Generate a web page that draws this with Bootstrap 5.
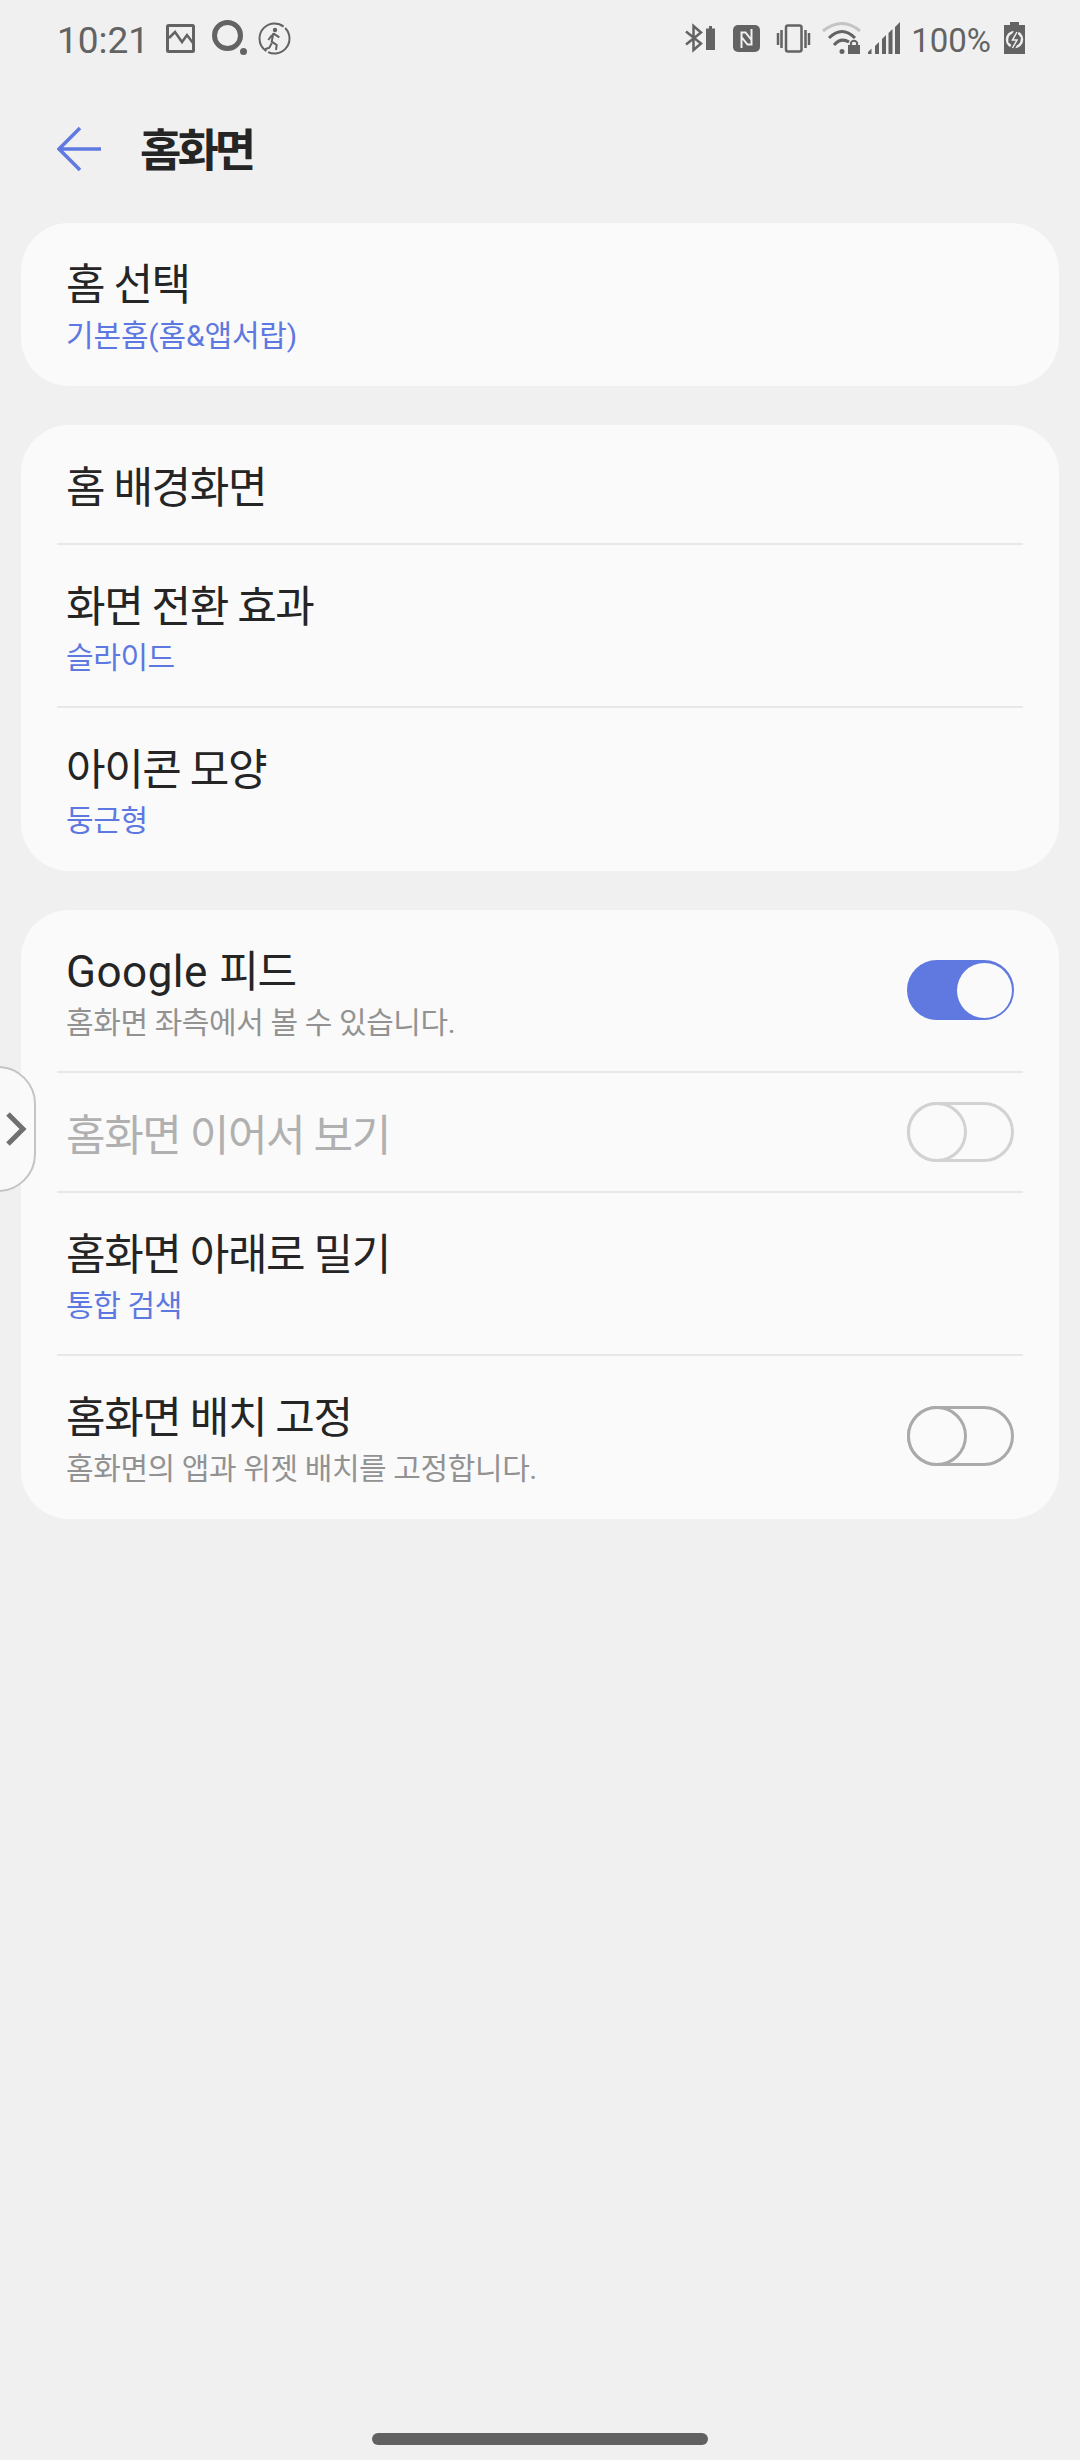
<!DOCTYPE html>
<html lang="ko">
<head>
  <meta charset="UTF-8">
  <title>홈화면</title>
  <link href="https://cdn.jsdelivr.net/npm/bootstrap@5.3.2/dist/css/bootstrap.min.css" rel="stylesheet">
  <style>
    html, body { margin: 0; }
    body { width: 1080px; height: 2460px; background: #f0f0f0; overflow: hidden; position: relative;
      font-family: Roboto, "Noto Sans CJK KR", sans-serif; color: #252525; }
    svg { display: block; flex: none; }
    .status-row { height: 80px; padding: 0 55px 4px 57px; color: #636363; }
    .status-time { font-size: 37px; line-height: 1; margin-top: 4px; }
    .status-pct { font-size: 33px; line-height: 1; margin: 4px 0 0 11px; }
    .ic-photo { margin-left: 17px; }
    .ic-ring { margin-left: 17px; }
    .ic-run { margin-left: 10px; }
    .ic-nfc { margin-left: 18px; }
    .ic-vib { margin-left: 16px; }
    .ic-wifi { margin-left: 11px; }
    .ic-signal { margin-left: 6px; }
    .ic-batt { margin-left: 13px; }
    .title-row { height: 143px; padding: 0 0 5px 57px; }
    .title-text { font-size: 45px; font-weight: 700; letter-spacing: -4px; margin: 6px 0 0 37px; }
    .panel-list { padding: 0 21px; gap: 39px; }
    .panel { background: #fafafa; border-radius: 48px; overflow: hidden; }
    .item { margin: 0 36px; padding: 0 9px; height: 120px; border-bottom: 2px solid #e8e8e8; }
    .item:last-child { border-bottom-color: transparent; }
    .item.tall { height: 163px; }
    .item-text { padding-top: 5px; }
    .item-text.single { padding-top: 7px; }
    .item-label { font-size: 43px; letter-spacing: -1.4px; line-height: 56px; }
    .item-label .latin { letter-spacing: .5px; font-size: 44px; }
    .item-sub { font-size: 30px; letter-spacing: -.4px; line-height: 41px; margin-top: 2px; }
    .item-sub.sub-wide { letter-spacing: -.15px; }
    .sub-accent { color: #5d78e0; }
    .sub-grey { color: #929292; }
    .off .item-label { color: #b0b0b0; }
    .toggle { flex: none; width: 107px; height: 60px; margin-bottom: 1px; border-radius: 30px; border: 3px solid #aaa; position: relative; }
    .toggle::after { content: ""; position: absolute; left: -3px; top: -3px; width: 60px; height: 60px; border-radius: 50%; border: 3px solid #aaa; background: #fafafa; }
    .toggle.on { background: #5f79e0; border-color: #5f79e0; }
    .toggle.on::after { left: auto; right: -1px; top: 0; width: 55px; height: 55px; border: 0; }
    .toggle.dim, .toggle.dim::after { border-color: #d2d2d2; }
    .edge-tab { position: absolute; left: -40px; top: 1066px; width: 76px; height: 126px; border: 2px solid #c4c4c4; border-radius: 38px; background: rgba(250,250,250,.9); }
    .edge-arrow { position: absolute; left: 5px; top: 1112px; }
    .home-bar { position: absolute; left: 372px; top: 2433px; width: 336px; height: 12px; border-radius: 6px; background: #616161; }
  </style>
</head>
<body>
  <div class="status-row d-flex align-items-center justify-content-between">
    <div class="d-flex align-items-center">
      <span class="status-time">10:21</span>
      <svg class="ic-photo" width="29" height="29" viewBox="0 0 29 29" fill="none" stroke="#636363" stroke-width="3"><rect x="1.500" y="1.500" width="26" height="26" rx="1"/><path d="M3 14l6-6 7 10 5-7 6 8" stroke-width="2.500"/></svg>
      <svg class="ic-ring" width="36" height="36" viewBox="0 0 36 36" fill="none"><circle cx="15.500" cy="15.500" r="13" stroke="#636363" stroke-width="5"/><circle cx="31.500" cy="31.500" r="3.500" fill="#636363"/></svg>
      <svg class="ic-run" width="33" height="33" viewBox="0 0 33 33" fill="none" stroke="#636363" stroke-width="2"><circle cx="16.500" cy="16.500" r="15" stroke-dasharray="30 2 48 2 12 0"/><circle cx="17" cy="8" r="2.200" fill="#636363" stroke="none"/><path d="M15.300 11.300l-1.600 8.400 5 3.300-.7 5M15.300 11.300l6 4M14 13l-3.700 5M13.700 21.300l-2.400 4.400-4.300 1.600"/></svg>
    </div>
    <div class="d-flex align-items-center">
      <svg width="30" height="32" viewBox="0 0 30 32" fill="none" stroke="#636363"><path d="M1 9.500l15 12-7.500 6.500V4l7.500 6.500-15 12" stroke-width="2.500"/><path d="M21 6.500h3V4h3v2.500h3V28h-9z" fill="#636363" stroke="none"/></svg>
      <svg class="ic-nfc" width="27" height="27" viewBox="0 0 27 27"><rect width="27" height="27" rx="5" fill="#636363"/><path d="M8.500 23V7.500h4L18.500 15M18.500 4v15.500h-4L8.500 12" fill="none" stroke="#f0f0f0" stroke-width="2"/></svg>
      <svg class="ic-vib" width="35" height="29" viewBox="0 0 35 29" fill="none" stroke="#636363" stroke-width="2.500"><rect x="10" y="1.500" width="15.500" height="26" rx="2"/><path d="M2 9v12M5.500 6v18M29.500 6v18M33 9v12"/></svg>
      <svg class="ic-wifi" width="39" height="32" viewBox="0 0 39 32" fill="none" stroke-width="3"><path d="M1 9Q20-6 38 9" stroke="#c4c4c4"/><path d="M7 16Q20 3 33 16M12 23Q19 15 27 20" stroke="#636363"/><circle cx="20" cy="29.500" r="2.500" fill="#636363"/><rect x="26" y="23" width="12" height="9" fill="#636363"/><circle cx="32" cy="22" r="3.200" stroke="#636363" stroke-width="2"/></svg>
      <svg class="ic-signal" width="33" height="32" viewBox="0 0 33 32" fill="#636363"><path d="M1 32v-2l3.500-3.500V32zM8 32v-8l4-4v12zM15 32V17l4-4v19zM21.500 32V11l4-4v25zM28 32V5l5-5v32z"/></svg>
      <span class="status-pct">100%</span>
      <svg class="ic-batt" width="21" height="32" viewBox="0 0 21 32"><path d="M6 0h9v3h6v29H0V3h6z" fill="#636363"/><circle cx="10.500" cy="17.500" r="7.500" fill="none" stroke="#f0f0f0" stroke-width="2.500"/><path d="M13 8l-5 10h5l-5 9" fill="none" stroke="#636363" stroke-width="5"/><path d="M13 10l-4.500 8h4.500l-4.500 8" fill="none" stroke="#f0f0f0" stroke-width="1.500"/></svg>
    </div>
  </div>

  <div class="title-row d-flex align-items-center">
    <svg width="46" height="46" viewBox="0 0 46 46" fill="none" stroke="#5f79e0" stroke-width="3.500"><path d="M44 23H3M23 2L2 23l21 21"/></svg>
    <span class="title-text">홈화면</span>
  </div>

  <div class="panel-list d-flex flex-column">
    <div class="panel">
      <div class="item tall d-flex flex-column justify-content-center item-text">
        <div class="item-label">홈 선택</div>
        <div class="item-sub sub-wide sub-accent">기본홈(홈&amp;앱서랍)</div>
      </div>
    </div>
    <div class="panel">
      <div class="item d-flex align-items-center item-text single"><div class="item-label">홈 배경화면</div></div>
      <div class="item tall d-flex flex-column justify-content-center item-text">
        <div class="item-label">화면 전환 효과</div>
        <div class="item-sub sub-accent">슬라이드</div>
      </div>
      <div class="item tall d-flex flex-column justify-content-center item-text">
        <div class="item-label">아이콘 모양</div>
        <div class="item-sub sub-accent">둥근형</div>
      </div>
    </div>
    <div class="panel">
      <div class="item tall d-flex align-items-center justify-content-between">
        <div class="item-text"><div class="item-label"><span class="latin">Google </span>피드</div><div class="item-sub sub-grey">홈화면 좌측에서 볼 수 있습니다.</div></div>
        <span class="toggle on"></span>
      </div>
      <div class="item off d-flex align-items-center justify-content-between">
        <div class="item-text single"><div class="item-label">홈화면 이어서 보기</div></div>
        <span class="toggle dim"></span>
      </div>
      <div class="item tall d-flex flex-column justify-content-center item-text">
        <div class="item-label">홈화면 아래로 밀기</div>
        <div class="item-sub sub-accent">통합 검색</div>
      </div>
      <div class="item tall d-flex align-items-center justify-content-between">
        <div class="item-text"><div class="item-label">홈화면 배치 고정</div><div class="item-sub sub-grey">홈화면의 앱과 위젯 배치를 고정합니다.</div></div>
        <span class="toggle"></span>
      </div>
    </div>
  </div>

  <div class="edge-tab"></div>
  <svg class="edge-arrow" width="22" height="34" viewBox="0 0 22 34" fill="none" stroke="#707070" stroke-width="5"><path d="M3 2l15 15L3 32"/></svg>
  <div class="home-bar"></div>

  <script src="https://cdn.jsdelivr.net/npm/bootstrap@5.3.2/dist/js/bootstrap.bundle.min.js"></script>
</body>
</html>
